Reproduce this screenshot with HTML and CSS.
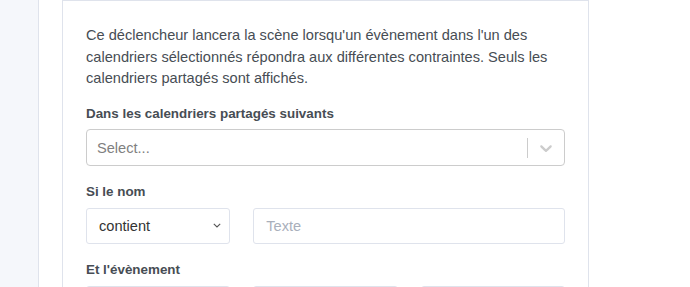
FILE: index.html
```html
<!DOCTYPE html>
<html lang="fr">
<head>
    <meta charset="UTF-8">
    <meta name="viewport" content="width=device-width, initial-scale=1.0">
    <title>Déclencheur calendrier</title>
    <link rel="stylesheet" href="styles.css">
</head>
<body>
    <div class="page">
        <div class="content">
            <div class="card">
                <p class="intro">Ce déclencheur lancera la scène lorsqu'un évènement dans l'un des calendriers sélectionnés répondra aux différentes contraintes. Seuls les calendriers partagés sont affichés.</p>

                <div class="form-group">
                    <label class="form-label">Dans les calendriers partagés suivants</label>
                    <div class="multi-select">
                        <div class="multi-value">Select...</div>
                        <div class="indicators">
                            <span class="separator"></span>
                            <span class="chevron">
                                <svg width="20" height="20" viewBox="0 0 20 20"><path fill="#cccccc" d="M4.516 7.548c0.436-0.446 1.043-0.481 1.576 0l3.908 3.747 3.908-3.747c0.533-0.481 1.141-0.446 1.574 0 0.436 0.445 0.408 1.197 0 1.615-0.406 0.418-4.695 4.502-4.695 4.502-0.217 0.223-0.502 0.335-0.787 0.335s-0.57-0.112-0.789-0.335c0 0-4.287-4.084-4.695-4.502s-0.436-1.170 0-1.615z"></path></svg>
                            </span>
                        </div>
                    </div>
                </div>

                <div class="form-group">
                    <label class="form-label">Si le nom</label>
                    <div class="row">
                        <select class="field">
                            <option>contient</option>
                            <option>est égal à</option>
                        </select>
                        <input class="field wide" type="text" placeholder="Texte">
                    </div>
                </div>

                <div class="form-group">
                    <label class="form-label">Et l'évènement</label>
                    <div class="row">
                        <select class="field">
                            <option>a commencé</option>
                        </select>
                        <input class="field" type="text">
                        <select class="field">
                            <option>minutes</option>
                        </select>
                    </div>
                </div>
            </div>
        </div>
    </div>
</body>
</html>
```

FILE: styles.css
```css
body {
    font-family: "Liberation Sans", Arial, sans-serif;
    margin: 0;
    background-color: #f5f7fb;
    color: #495057;
    overflow: hidden;
}
.page {
    padding-left: 38px;
    height: 287px;
}
.content {
    background-color: #fff;
    border-left: 1px solid #dfe3ec;
    height: 100%;
    padding-left: 23px;
}
.card {
    width: 479px;
    border: 1px solid #dfe3ec;
    border-bottom: none;
    padding: 24px 23px 0 23px;
    background-color: #fff;
}
.intro {
    margin: 0 0 13px 0;
    font-size: 14.6px;
    line-height: 21.6px;
    color: #474d54;
}
.form-group {
    margin-bottom: 15px;
}
.form-label {
    display: block;
    font-size: 13.4px;
    line-height: 21.6px;
    font-weight: bold;
    color: #474d54;
    margin-bottom: 5px;
}
.multi-select {
    display: flex;
    align-items: center;
    height: 35px;
    border: 1px solid #cccccc;
    border-radius: 4px;
    background-color: #fff;
}
.multi-value {
    flex: 1;
    padding-left: 10px;
    font-size: 14.6px;
    color: #808080;
}
.indicators {
    display: flex;
    align-items: center;
}
.separator {
    width: 1px;
    height: 20px;
    background-color: #cccccc;
}
.chevron {
    display: flex;
    padding: 8px;
}
.row {
    display: grid;
    grid-template-columns: repeat(3, 1fr);
    column-gap: 23px;
}
.field {
    height: 36px;
    box-sizing: border-box;
    border: 1px solid #dfe3ec;
    border-radius: 3px;
    background-color: #fff;
    font-family: "Liberation Sans", Arial, sans-serif;
    font-size: 14.6px;
    color: #333;
    padding: 0 12px;
    margin: 0;
    width: 100%;
}
select.field {
    -webkit-appearance: none;
    appearance: none;
    font-size: 14.6px;
    background-image: url("data:image/svg+xml;utf8,<svg xmlns='http://www.w3.org/2000/svg' width='8' height='5' viewBox='0 0 8 5'><path d='M0.8 0.8 L4 4 L7.2 0.8' fill='none' stroke='%23555' stroke-width='1.1'/></svg>");
    background-repeat: no-repeat;
    background-position: right 8px center;
}
.field.wide {
    grid-column: span 2;
}
.field::placeholder {
    color: #a9afbb;
}
```
